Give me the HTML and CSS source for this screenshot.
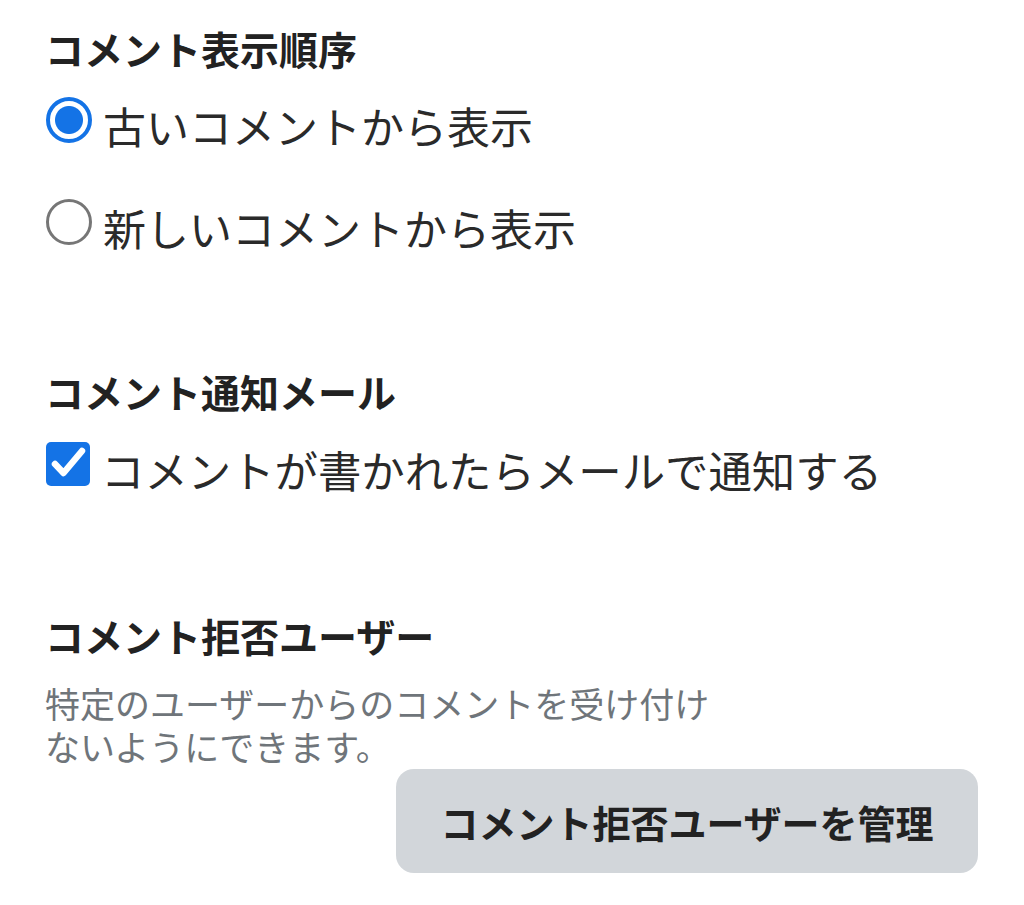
FILE: index.html
```html
<!DOCTYPE html>
<html lang="ja">
<head>
<meta charset="utf-8">
<title>コメント設定</title>
<link rel="stylesheet" href="styles.css">
</head>
<body>
<main class="settings">
  <section class="group group-order">
    <h2 class="heading">コメント表示順序</h2>
    <label class="option option-first">
      <input class="radio" type="radio" name="order" checked>
      <span class="option-text">古いコメントから表示</span>
    </label>
    <label class="option option-second">
      <input class="radio" type="radio" name="order">
      <span class="option-text">新しいコメントから表示</span>
    </label>
  </section>

  <section class="group group-mail">
    <h2 class="heading">コメント通知メール</h2>
    <label class="option option-check">
      <span class="checkbox">
        <svg viewBox="0 0 44 44" width="44" height="44" aria-hidden="true">
          <path d="M9 22 L17.5 31 L36 9" fill="none" stroke="#fff" stroke-width="6.5" stroke-linecap="round" stroke-linejoin="round"/>
        </svg>
      </span>
      <span class="option-text">コメントが書かれたらメールで通知する</span>
    </label>
  </section>

  <section class="group group-block">
    <h2 class="heading">コメント拒否ユーザー</h2>
    <p class="desc">特定のユーザーからのコメントを受け付けないようにできます。</p>
    <div class="actions">
      <button class="btn" type="button">コメント拒否ユーザーを管理</button>
    </div>
  </section>
</main>
</body>
</html>
```

FILE: styles.css
```css
html, body {
  margin: 0;
  padding: 0;
  background: #ffffff;
}

body {
  font-family: "Noto Sans CJK JP", "Noto Sans", sans-serif;
  color: #222222;
  width: 1024px;
  height: 905px;
  overflow: hidden;
}

.settings {
  padding: 22px 46px 0 45px;
}

.group {
  margin: 0;
}

.group-mail {
  margin-top: 111px;
}

.group-block {
  margin-top: 113px;
}

.heading {
  margin: 0;
  font-size: 39px;
  line-height: 52px;
  font-weight: 700;
  color: #222222;
}

.option {
  display: flex;
  align-items: center;
  height: 60px;
  cursor: pointer;
}

.option-first {
  margin-top: 18px;
}

.option-second {
  margin-top: 42px;
}

.option-check {
  margin-top: 19px;
}

.option-text {
  font-size: 43px;
  line-height: 60px;
  color: #2a2a2a;
  margin-left: 11px;
  position: relative;
  top: 3px;
}

.option-check .option-text {
  font-size: 43.4px;
}

.radio {
  appearance: none;
  -webkit-appearance: none;
  margin: 0 0 0 1px;
  width: 46px;
  height: 46px;
  box-sizing: border-box;
  border-radius: 50%;
  border: 3px solid #767676;
  background: #ffffff;
  flex: none;
  position: relative;
  top: -2px;
}

.radio:checked {
  border: 4px solid #1473e6;
  background: radial-gradient(circle, #1473e6 0, #1473e6 13.5px, #ffffff 14.5px);
}

.checkbox {
  display: flex;
  flex: none;
  width: 44px;
  height: 44px;
  margin-left: 1px;
  border-radius: 5px;
  background: #1473e6;
  position: relative;
  top: -2px;
}

.desc {
  margin: 20px 0 0;
  max-width: 680px;
  font-size: 35px;
  line-height: 43px;
  color: #6f757a;
}

.actions {
  display: flex;
  justify-content: flex-end;
  margin-top: 2px;
}

.btn {
  width: 582px;
  height: 104px;
  border: none;
  border-radius: 18px;
  background: #d2d6da;
  font-family: "Noto Sans CJK JP", "Noto Sans", sans-serif;
  font-size: 38px;
  font-weight: 700;
  color: #222222;
  padding: 0;
  cursor: pointer;
}
```
